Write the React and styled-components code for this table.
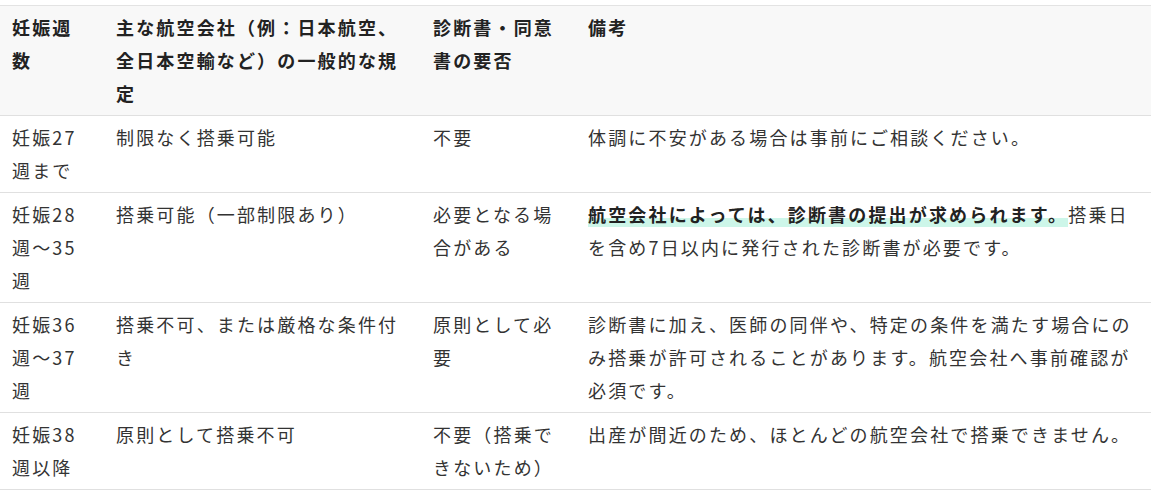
import React from "react";
import styled, { createGlobalStyle } from "styled-components";

const GlobalStyle = createGlobalStyle`
    body {
        margin: 0;
        background: #fff;
        font-family: "Noto Sans CJK JP", "Noto Sans", sans-serif;
        color: #333;
    }
`;

const Page = styled.div`
    padding-top: 5px;
    width: 1151px;
`;

const Table = styled.table`
    width: 100%;
    border-collapse: collapse;
    table-layout: fixed;
    font-size: 18px;
    line-height: 33px;
    letter-spacing: 0.12em;
    border-top: 1px solid #e3e3e3;
`;

const HeadRow = styled.tr`
    background: #f8f8f8;
    border-bottom: 1px solid #e0e0e0;
`;

const Row = styled.tr`
    border-bottom: 1px solid #e0e0e0;
`;

const Th = styled.th`
    padding: 5px 12px;
    text-align: left;
    vertical-align: top;
    font-weight: 700;
    color: #222;
`;

const Td = styled.td`
    padding: 5px 12px;
    vertical-align: top;
`;

const Marker = styled.strong`
    font-weight: 700;
    color: #222;
    background: linear-gradient(transparent 66%, #cdf6e9 66%);
`;

const columns = [104, 317, 155, null];

const rows = [
    {
        week: "妊娠27週まで",
        rule: "制限なく搭乗可能",
        doc: "不要",
        note: "体調に不安がある場合は事前にご相談ください。"
    },
    {
        week: "妊娠28週〜35週",
        rule: "搭乗可能（一部制限あり）",
        doc: "必要となる場合がある",
        mark: "航空会社によっては、診断書の提出が求められます。",
        note: "搭乗日を含め7日以内に発行された診断書が必要です。"
    },
    {
        week: "妊娠36週〜37週",
        rule: "搭乗不可、または厳格な条件付き",
        doc: "原則として必要",
        note: "診断書に加え、医師の同伴や、特定の条件を満たす場合にのみ搭乗が許可されることがあります。航空会社へ事前確認が必須です。"
    },
    {
        week: "妊娠38週以降",
        rule: "原則として搭乗不可",
        doc: "不要（搭乗できないため）",
        note: "出産が間近のため、ほとんどの航空会社で搭乗できません。"
    }
];

export default function App() {
    return <Page>
        <GlobalStyle />
        <Table>
            <colgroup>
                {columns.map((w, i) => <col key={i} style={w ? { width: w } : undefined} />)}
            </colgroup>
            <thead>
                <HeadRow>
                    <Th>妊娠週数</Th>
                    <Th>主な航空会社（例：日本航空、全日本空輸など）の一般的な規定</Th>
                    <Th>診断書・同意書の要否</Th>
                    <Th>備考</Th>
                </HeadRow>
            </thead>
            <tbody>
                {rows.map(r => <Row key={r.week}>
                    <Td>{r.week}</Td>
                    <Td>{r.rule}</Td>
                    <Td>{r.doc}</Td>
                    <Td>
                        {r.mark ? <Marker>{r.mark}</Marker> : null}
                        {r.note}
                    </Td>
                </Row>)}
            </tbody>
        </Table>
    </Page>;
}
